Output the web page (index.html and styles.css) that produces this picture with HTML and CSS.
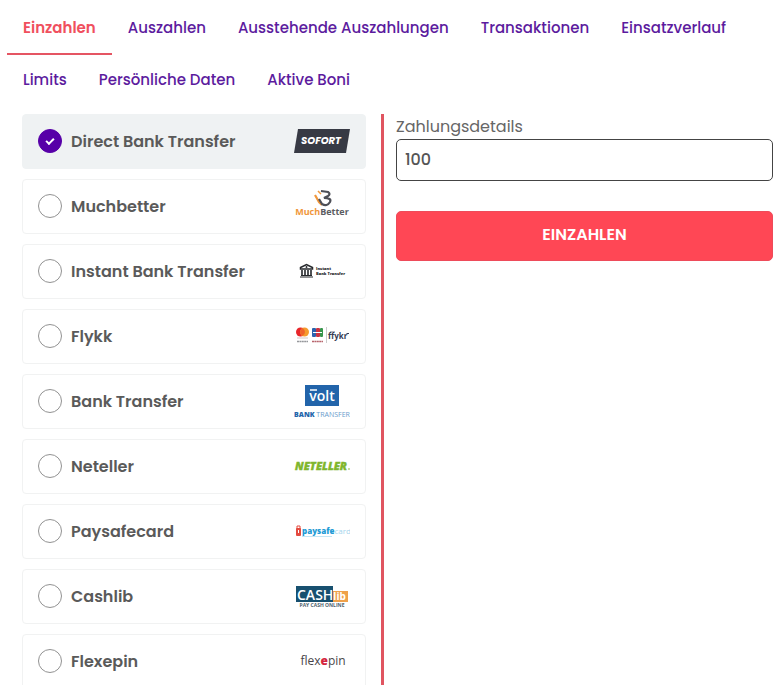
FILE: index.html
```html
<!DOCTYPE html>
<html lang="de">
<head>
<meta charset="utf-8">
<meta name="viewport" content="width=device-width, initial-scale=1">
<title>Einzahlen</title>
<link rel="stylesheet" href="styles.css">
</head>
<body>
<nav class="tabs">
  <a class="tab tab-active" href="#einzahlen" aria-current="page">Einzahlen</a>
  <a class="tab" href="#auszahlen">Auszahlen</a>
  <a class="tab" href="#ausstehend">Ausstehende Auszahlungen</a>
  <a class="tab" href="#transaktionen">Transaktionen</a>
  <a class="tab" href="#einsatzverlauf">Einsatzverlauf</a>
  <a class="tab" href="#limits">Limits</a>
  <a class="tab" href="#daten">Persönliche Daten</a>
  <a class="tab" href="#boni">Aktive Boni</a>
</nav>
<form class="cashier">
  <div class="methods">
    <label class="method">
      <input class="radio" type="radio" name="method" checked>
      <span class="name">Direct Bank Transfer</span>
      <svg class="logo" viewBox="0 0 56 36" aria-hidden="true">
        <path d="M4 6H56L52 30H0Z" fill="#373a44"/>
        <text class="poppins bold italic" x="27" y="21" font-size="10" fill="#fff" text-anchor="middle">SOFORT</text>
      </svg>
    </label>
    <label class="method">
      <input class="radio" type="radio" name="method">
      <span class="name">Muchbetter</span>
      <svg class="logo" viewBox="0 0 56 36" aria-hidden="true">
        <path d="M21 7L25 14L28 17" stroke="#f0973c" stroke-width="2.2" fill="none"/>
        <path d="M24 3L27 6" stroke="#f0973c" stroke-width="1.500" fill="none"/>
        <path d="M27 3L34 4Q37 6 34 8L30 10Q38 10 36 14Q33 19 28 16L25 11" stroke="#4d4f57" stroke-width="2.200" fill="none"/>
        <text class="lg bold" x="28" y="27" font-size="9" fill="#f0973c" text-anchor="middle">Much<tspan fill="#5b5d62">Better</tspan></text>
      </svg>
    </label>
    <label class="method">
      <input class="radio" type="radio" name="method">
      <span class="name">Instant Bank Transfer</span>
      <svg class="logo" viewBox="0 0 56 36" aria-hidden="true">
        <path d="M6.500 16V14.500L12.500 11.500L18.500 14.500V16Z" fill="none" stroke="#25272b" stroke-width="1.500"/>
        <path d="M8 17V22M11 17V22M14 17V22M17 17V22" stroke="#25272b" stroke-width="1.600"/>
        <path d="M7 22.500H18M6 24H19" stroke="#25272b" stroke-width="1.200"/>
        <circle cx="12.500" cy="14" r="1" fill="#25272b"/>
        <text class="lg heavy" x="22" y="17" font-size="4" fill="#25272b">Instant</text>
        <text class="lg heavy" x="22" y="22" font-size="4" fill="#25272b">Bank Transfer</text>
      </svg>
    </label>
    <label class="method">
      <input class="radio" type="radio" name="method">
      <span class="name">Flykk</span>
      <svg class="logo" viewBox="0 0 56 36" aria-hidden="true">
        <circle cx="6.500" cy="14" r="4.500" fill="#e8262b"/>
        <circle cx="10.500" cy="14" r="4.500" fill="#f59b2c"/>
        <path d="M8.500 10A4.500 4.500 0 0 1 8.500 18A4.500 4.500 0 0 1 8.500 10Z" fill="#f0622a"/>
        <path d="M3 20H14" stroke="#d3c6c3"/>
        <rect x="18" y="10" width="4" height="9" rx="1" fill="#2b62ad"/>
        <rect x="22" y="10" width="4" height="9" rx="1" fill="#c93442"/>
        <rect x="26" y="10" width="3" height="9" rx="1" fill="#37954b"/>
        <path d="M19 14.500H28" stroke="#fff" stroke-width="1"/>
        <path d="M3 23.500H14" stroke="#96989c" stroke-width="1.500" stroke-dasharray="2 .4"/>
        <path d="M18 23.500H29" stroke="#b8656d" stroke-width="1.500" stroke-dasharray="2 .4"/>
        <path d="M32.500 9V25" stroke="#ccc"/>
        <path d="M36 13.500H41" stroke="#b5b9c3"/>
        <text class="lg bold" x="34" y="21" font-size="8" fill="#343b53">ffykr</text>
        <path d="M52.500 15.500H55" stroke="#343b53"/>
      </svg>
    </label>
    <label class="method">
      <input class="radio" type="radio" name="method">
      <span class="name">Bank Transfer</span>
      <svg class="logo" viewBox="0 0 56 36" aria-hidden="true">
        <rect x="11" y="2" width="34" height="21" fill="#2264aa"/>
        <path d="M16 7H23" stroke="#fff" stroke-width="1.500"/>
        <text class="lg semi" x="28" y="18" font-size="14" fill="#fff" text-anchor="middle">volt</text>
        <text class="lg" x="28" y="34" font-size="7" fill="#6a9ccc" text-anchor="middle"><tspan class="heavy" fill="#2264aa">BANK</tspan> TRANSFER</text>
      </svg>
    </label>
    <label class="method">
      <input class="radio" type="radio" name="method">
      <span class="name">Neteller</span>
      <svg class="logo" viewBox="0 0 56 36" aria-hidden="true">
        <text class="lg heavy italic" x="27" y="22" font-size="11" fill="#80b62d" stroke="#80b62d" stroke-width=".4" text-anchor="middle">NETELLER</text>
        <circle cx="55" cy="21" r="0.800" fill="#80b62d"/>
      </svg>
    </label>
    <label class="method">
      <input class="radio" type="radio" name="method">
      <span class="name">Paysafecard</span>
      <svg class="logo" viewBox="0 0 56 36" aria-hidden="true">
        <rect x="2" y="15" width="5" height="8" rx="1" fill="#e44a3f"/>
        <path d="M3 16V13H6V16" fill="none" stroke="#e44a3f"/>
        <path d="M4.500 17V20" stroke="#fff"/>
        <path d="M8 23.500H38" stroke="#c5e6f5"/>
        <text class="lg" x="8" y="21" font-size="8" fill="#a5d6ee"><tspan class="heavy" fill="#239bd5">paysafe</tspan>card</text>
      </svg>
    </label>
    <label class="method">
      <input class="radio" type="radio" name="method">
      <span class="name">Cashlib</span>
      <svg class="logo" viewBox="0 0 56 36" aria-hidden="true">
        <rect x="2" y="8" width="37" height="16" fill="#17506f"/>
        <rect x="39" y="13" width="15" height="11" fill="#efa14a"/>
        <text class="lg semi" x="3" y="22" font-size="14" fill="#fff">CASH<tspan class="bold" font-size="10">lib</tspan></text>
        <text class="lg bold" x="28" y="29" font-size="5" fill="#4f626c" text-anchor="middle">PAY CASH ONLINE</text>
      </svg>
    </label>
    <label class="method">
      <input class="radio" type="radio" name="method">
      <span class="name">Flexepin</span>
      <svg class="logo" viewBox="0 0 56 36" aria-hidden="true">
        <text class="lg" x="29" y="22" font-size="12" fill="#4a4549" text-anchor="middle">flex<tspan class="heavy" fill="#d5253e">e</tspan>pin</text>
      </svg>
    </label>
  </div>
  <div class="details">
    <label class="caption" for="amount">Zahlungsdetails</label>
    <input class="amount" id="amount" type="text" inputmode="decimal" value="100">
    <button class="submit" type="button">EINZAHLEN</button>
  </div>
</form>
</body>
</html>
```
FILE: styles.css
```css
* {
  box-sizing: border-box;
}

body {
  display: flex;
  flex-direction: column;
  height: 100vh;
  margin: 0;
  padding: 3px 8px 2px 7px;
  overflow: hidden;
  background: #fff;
  color: #5a5a5a;
  font-family: Poppins, Inter, sans-serif;
  font-size: 16px;
}

.tabs {
  display: flex;
  flex-wrap: wrap;
  margin-bottom: 7px;
}

.tab {
  height: 52px;
  padding: 0 16px;
  border-bottom: 2px solid transparent;
  color: #5c1b9e;
  font-size: 15px;
  font-weight: 500;
  line-height: 50px;
  text-decoration: none;
}

.tab-active {
  border-color: #e55563;
  color: #f0505e;
  font-weight: 600;
}

.cashier {
  display: grid;
  flex: 1;
  grid-template-columns: 1fr 1fr;
  gap: 12px;
  min-height: 0;
}

.methods {
  display: flex;
  flex-direction: column;
  gap: 10px;
  padding: 0 15px;
  border-right: 3px solid #e05560;
  overflow: hidden;
}

.method {
  display: flex;
  flex: none;
  align-items: center;
  height: 55px;
  padding: 0 15px 1px;
  border: 1px solid #f1f2f2;
  border-radius: 4px;
  cursor: pointer;
}

.method:has(:checked) {
  border-color: #eff2f3;
  background: #eff2f3;
}

.radio {
  display: grid;
  width: 24px;
  height: 24px;
  margin: 0 9px 0 0;
  place-items: center;
  appearance: none;
  border: 1px solid #929292;
  border-radius: 50%;
  background: #fff;
}

.radio:checked {
  border-color: #5700a8;
  background: #5700a8;
}

.radio:checked::before {
  width: 6px;
  height: 3px;
  margin-bottom: 2px;
  border: solid #fff;
  border-width: 0 0 2px 2px;
  box-sizing: content-box;
  content: "";
  transform: rotate(-45deg);
}

.name {
  flex: 1;
  font-size: 16px;
  font-weight: 600;
}

.logo {
  width: 56px;
  height: 36px;
}

.lg {
  font-family: "Open Sans", sans-serif;
}

.poppins {
  font-family: Poppins, sans-serif;
}

.semi {
  font-weight: 600;
}

.bold {
  font-weight: 700;
}

.heavy {
  font-weight: 800;
}

.italic {
  font-style: italic;
}

.details {
  display: flex;
  flex-direction: column;
}

.caption {
  height: 25px;
  color: #666;
  font-size: 16px;
  line-height: 25px;
}

.amount {
  width: 100%;
  height: 42px;
  padding: 0 8px 2px;
  border: 1px solid #444;
  border-radius: 5px;
  background: #fff;
  color: #555;
  font: inherit;
  font-weight: 500;
}

.submit {
  height: 50px;
  margin-top: 30px;
  padding: 0 8px 3px;
  border: 1px solid #ee4b5a;
  border-radius: 5px;
  background: #ff4755;
  color: #fff;
  font: inherit;
  font-weight: 600;
  cursor: pointer;
}
```
